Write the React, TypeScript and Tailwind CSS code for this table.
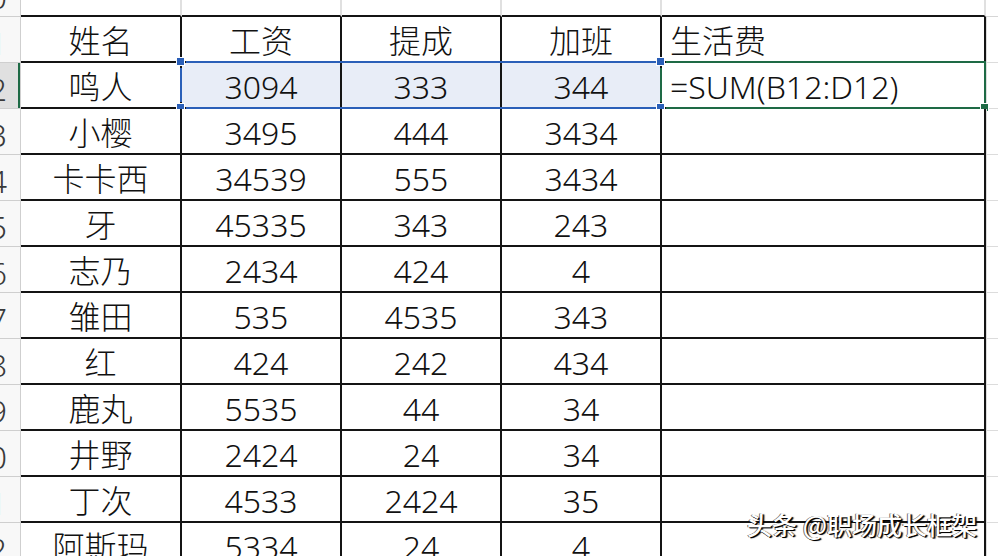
import React from "react";

const rows: { n: number; a: string; b: string; c: string; d: string; e: string; header?: boolean }[] = [
  { n: 11, a: "姓名", b: "工资", c: "提成", d: "加班", e: "生活费", header: true },
  { n: 12, a: "鸣人", b: "3094", c: "333", d: "344", e: "=SUM(B12:D12)" },
  { n: 13, a: "小樱", b: "3495", c: "444", d: "3434", e: "" },
  { n: 14, a: "卡卡西", b: "34539", c: "555", d: "3434", e: "" },
  { n: 15, a: "牙", b: "45335", c: "343", d: "243", e: "" },
  { n: 16, a: "志乃", b: "2434", c: "424", d: "4", e: "" },
  { n: 17, a: "雏田", b: "535", c: "4535", d: "343", e: "" },
  { n: 18, a: "红", b: "424", c: "242", d: "434", e: "" },
  { n: 19, a: "鹿丸", b: "5535", c: "44", d: "34", e: "" },
  { n: 20, a: "井野", b: "2424", c: "24", d: "34", e: "" },
  { n: 21, a: "丁次", b: "4533", c: "2424", d: "35", e: "" },
  { n: 22, a: "阿斯玛", b: "5334", c: "24", d: "4", e: "" },
];

const font = { fontFamily: '"Noto Sans", "Noto Sans CJK SC", sans-serif' };

function RowHead({ n, selected }: { n: number; selected?: boolean }) {
  return (
    <div
      className={
        "relative w-[21px] shrink-0 h-full overflow-hidden flex items-end justify-end pr-[13px] pb-[3px] border-r border-b border-[#cfcfcf] " +
        (selected ? "bg-[#e0e0e0]" : "bg-[#f8f8f8]")
      }
    >
      <span className="whitespace-nowrap text-[32px] leading-[32px] font-light text-[#3a3a3a]">{n}</span>
      {selected && <div className="absolute right-0 top-0 bottom-0 w-[2px] bg-[#1e6a45]" />}
    </div>
  );
}

function Cell({ w, text, align = "center", sel, extra = "" }: { w: string; text: string; align?: "center" | "left"; sel?: boolean; extra?: string }) {
  return (
    <div
      className={
        "shrink-0 h-full flex items-end pb-[4px] border-r-2 border-b-2 border-[#141414] " +
        w +
        " " +
        (align === "center" ? "justify-center" : "justify-start pl-[8px]") +
        (sel ? " bg-[#e8edf7]" : " bg-white") +
        " " +
        extra
      }
    >
      <span className="whitespace-nowrap text-[32px] leading-[32px] font-light text-[#111111]">{text}</span>
    </div>
  );
}

function Handle({ cls, color = "bg-[#2a5fb8]" }: { cls: string; color?: string }) {
  return <div className={"absolute w-[9px] h-[9px] border border-white " + color + " " + cls} />;
}

export default function App() {
  return (
    <div className="w-[998px] h-[556px] overflow-hidden bg-white relative" style={font}>
      {/* row 10 partially visible */}
      <div className="flex h-[48px] mt-[-31px]">
        <RowHead n={10} />
        <div className="w-[161px] shrink-0 h-full border-r-2 border-r-[#e0e0e0] border-b-2 border-b-[#141414]" />
        <div className="w-[160px] shrink-0 h-full border-r-2 border-r-[#e0e0e0] border-b-2 border-b-[#141414]" />
        <div className="w-[160px] shrink-0 h-full border-r-2 border-r-[#e0e0e0] border-b-2 border-b-[#141414]" />
        <div className="w-[160px] shrink-0 h-full border-r-2 border-r-[#e0e0e0] border-b-2 border-b-[#141414]" />
        <div className="w-[324px] shrink-0 h-full border-r-2 border-r-[#e0e0e0] border-b-2 border-b-[#141414]" />
        <div className="flex-1 h-full border-b border-[#d6d6d6]" />
      </div>

      {rows.map((r) => {
        const sel = r.n === 12;
        return (
          <div key={r.n} className="relative flex h-[46px]">
            <RowHead n={r.n} selected={sel} />
            <Cell w="w-[161px]" text={r.a} extra={r.header ? "pb-[2px]" : ""} />
            <Cell w="w-[160px]" text={r.b} sel={sel} extra={r.header ? "pb-[2px]" : ""} />
            <Cell w="w-[160px]" text={r.c} sel={sel} extra={r.header ? "pb-[2px]" : ""} />
            <Cell w="w-[160px]" text={r.d} sel={sel} extra={r.header ? "pb-[2px]" : ""} />
            <Cell w="w-[324px]" text={r.e} align="left" extra={r.header ? "pb-[2px]" : ""} />
            <div className="flex-1 h-full border-b border-l border-[#dcdcdc]" />
            {sel && (
              <>
                {/* blue selection B12:D12 */}
                <div className="absolute left-[186px] w-[470px] top-[-2px] h-[2px] bg-[#2a5fb8]" />
                <div className="absolute left-[186px] w-[470px] top-[44px] h-[2px] bg-[#2a5fb8]" />
                <div className="absolute left-[180px] w-[2px] top-[5px] h-[34px] bg-[#2a5fb8]" />
                {/* green active cell E12 */}
                <div className="absolute left-[666px] w-[320px] top-[-2px] h-[2px] bg-[#1e6a45]" />
                <div className="absolute left-[666px] w-[314px] top-[44px] h-[2px] bg-[#1e6a45]" />
                <div className="absolute left-[660px] w-[2px] top-[5px] h-[34px] bg-[#1e6a45]" />
                <div className="absolute left-[984px] w-[2px] top-[-2px] h-[46px] bg-[#1e6a45]" />
                <Handle cls="left-[176px] top-[-6px]" />
                <Handle cls="left-[176px] top-[40px]" />
                <Handle cls="left-[656px] top-[-6px]" />
                <Handle cls="left-[656px] top-[40px]" />
                <Handle cls="left-[980px] top-[40px] w-[8px] h-[8px]" color="bg-[#1e6a45]" />
              </>
            )}
          </div>
        );
      })}

      <div
        className="absolute left-[747px] top-[509px] text-[25px] leading-[30px] font-medium text-white whitespace-nowrap [text-shadow:1px_1px_0_#000,2px_1px_1px_rgba(0,0,0,0.8),-1px_0_0_rgba(0,0,0,0.6)]"
        style={{ fontFamily: '"Noto Sans CJK SC", "Noto Sans", sans-serif' }}
      >
        头条 @职场成长框架
      </div>
    </div>
  );
}
